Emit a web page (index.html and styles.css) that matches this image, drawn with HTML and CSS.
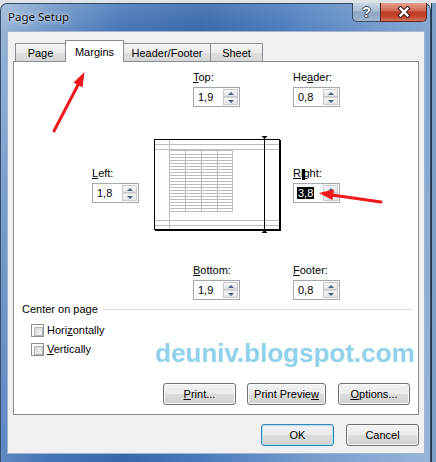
FILE: index.html
```html
<!DOCTYPE html>
<html>
<head>
<meta charset="utf-8">
<title>Page Setup</title>
<link rel="stylesheet" href="styles.css">
</head>
<body>
<div class="window">
  <div class="titlebar">
    <span class="title">Page Setup</span>
    <div class="caption">
      <div class="cbtn help"><span class="q">?</span></div>
      <div class="cbtn close">
        <svg width="14" height="12" viewBox="0 0 14 12"><path d="M3.5 2.5 L10.5 9.5 M10.5 2.5 L3.5 9.5" stroke="#3a1a14" stroke-width="4.4" stroke-linecap="square" fill="none"/><path d="M3.5 2.5 L10.5 9.5 M10.5 2.5 L3.5 9.5" stroke="#ffffff" stroke-width="2.4" stroke-linecap="square" fill="none"/></svg>
      </div>
    </div>
  </div>
  <div class="client">
    <div class="tabs">
      <div class="tab t-page">Page</div>
      <div class="tab t-margins active">Margins</div>
      <div class="tab t-hf">Header/Footer</div>
      <div class="tab t-sheet">Sheet</div>
    </div>
    <div class="panel">
      <div class="row row-top">
        <div class="field">
          <div class="lbl"><u>T</u>op:</div>
          <div class="spin"><span class="val">1,9</span><span class="arrows"><span class="up"></span><span class="down"></span></span></div>
        </div>
        <div class="field">
          <div class="lbl">He<u>a</u>der:</div>
          <div class="spin"><span class="val">0,8</span><span class="arrows"><span class="up"></span><span class="down"></span></span></div>
        </div>
      </div>
      <div class="row row-mid">
        <div class="field f-left">
          <div class="lbl"><u>L</u>eft:</div>
          <div class="spin"><span class="val">1,8</span><span class="arrows"><span class="up"></span><span class="down"></span></span></div>
        </div>
        <svg class="preview" width="139" height="97" viewBox="0 0 139 97">
          <rect x="1" y="4" width="126" height="91" fill="#000"/>
          <rect x="0.5" y="3.5" width="125" height="90" fill="#fff" stroke="#000"/>
          <g stroke="#bdbdbd" stroke-width="1" fill="none">
            <path d="M15.5 4 V93 M1 8.5 H125 M1 13.5 H125 M1 84.5 H125 M1 89.5 H125"/>
            <path d="M31.5 14.5 V75.5 M47.5 14.5 V75.5 M63.5 14.5 V75.5 M78.5 14.5 V75.5"/>
            <path d="M15.5 14.5 H78.5 M15.5 18.5 H78.5 M15.5 21.5 H78.5 M15.5 24.5 H78.5 M15.5 27.5 H78.5 M15.5 30.5 H78.5 M15.5 33.5 H78.5 M15.5 36.5 H78.5 M15.5 39.5 H78.5 M15.5 42.5 H78.5 M15.5 45.5 H78.5 M15.5 48.5 H78.5 M15.5 51.5 H78.5 M15.5 54.5 H78.5 M15.5 57.5 H78.5 M15.5 60.5 H78.5 M15.5 63.5 H78.5 M15.5 66.5 H78.5 M15.5 69.5 H78.5 M15.5 72.5 H78.5 M15.5 75.5 H78.5"/>
          </g>
          <path d="M110.5 0 V97" stroke="#000" stroke-width="1"/>
          <path d="M107.5 0 H113.5 L110.5 3 Z" fill="#000"/>
          <path d="M107.5 97 H113.5 L110.5 94 Z" fill="#000"/>
        </svg>
        <div class="field f-right">
          <div class="lbl"><u>R</u>ight:</div>
          <div class="spin"><span class="val"><span class="sel">3,8</span></span><span class="arrows"><span class="up"></span><span class="down"></span></span></div>
          <span class="ibeam"></span>
        </div>
      </div>
      <div class="row row-bot">
        <div class="field">
          <div class="lbl"><u>B</u>ottom:</div>
          <div class="spin"><span class="val">1,9</span><span class="arrows"><span class="up"></span><span class="down"></span></span></div>
        </div>
        <div class="field">
          <div class="lbl"><u>F</u>ooter:</div>
          <div class="spin"><span class="val">0,8</span><span class="arrows"><span class="up"></span><span class="down"></span></span></div>
        </div>
      </div>
      <div class="group-head"><span>Center on page</span><span class="rule"></span></div>
      <div class="check c1"><span class="cb"></span><span>Hori<u>z</u>ontally</span></div>
      <div class="check c2"><span class="cb"></span><span><u>V</u>ertically</span></div>
      <div class="panel-btns">
        <div class="btn b-print"><span><u>P</u>rint...</span></div>
        <div class="btn b-preview"><span>Print Previe<u>w</u></span></div>
        <div class="btn b-options"><span><u>O</u>ptions...</span></div>
      </div>
      <div class="watermark">deuniv.blogspot.com</div>
    </div>
    <div class="footer">
      <div class="btn default">OK</div>
      <div class="btn">Cancel</div>
    </div>
  </div>
</div>
<svg class="arrows-overlay" width="436" height="462" viewBox="0 0 436 462">
  <path d="M54 131 L79 83" stroke="#f01818" stroke-width="3" stroke-linecap="round" fill="none"/>
  <path d="M84.5 72 L82.5 87.5 L73.5 82.5 Z" fill="#f01818"/>
  <path d="M381 202 L332 195" stroke="#f01818" stroke-width="3" stroke-linecap="round" fill="none"/>
  <path d="M319 193 L334 189.5 L332.5 200 Z" fill="#f01818"/>
</svg>
</body>
</html>
```
FILE: styles.css
```css
* { box-sizing: border-box; }
html, body { margin: 0; padding: 0; }
body {
  width: 436px;
  height: 462px;
  overflow: hidden;
  position: relative;
  padding-top: 3px;
  background:
    linear-gradient(180deg, #dfe2e6 0 3px, transparent 3px),
    linear-gradient(90deg, #dfe2e6 0 431px, #22334a 431px 432px, #7d9ec6 432px);
  font-family: "Liberation Sans", Arial, sans-serif;
  font-size: 11px;
  color: #000;
}
u { text-decoration: underline; text-underline-offset: 1px; }

.window {
  width: 431px;
  height: 459px;
  border: 1px solid #34506f;
  border-bottom: 0;
  border-radius: 7px 7px 0 0;
  padding: 0 5px 0 6px;
  display: flex;
  flex-direction: column;
  background:
    linear-gradient(180deg, rgba(255,255,255,0.12), rgba(255,255,255,0) 28px),
    linear-gradient(100deg, #9db8da 0%, #7399c9 9%, #4676b7 24%, #3768aa 40%, #4a7cbd 56%, #7399cb 74%, #98b5d9 100%);
}

.titlebar {
  height: 27px;
  display: flex;
  justify-content: space-between;
  align-items: flex-start;
}
.title {
  margin: 5px 0 0 1px;
  font-family: "Noto Sans", sans-serif;
  font-size: 11.5px;
  line-height: 16px;
  color: #141414;
  text-shadow: 0 0 6px rgba(255,255,255,0.85), 0 0 3px rgba(255,255,255,0.6);
}
.caption {
  display: flex;
  margin: -1px -2px 0 0;
}
.cbtn {
  height: 19px;
  display: flex;
  align-items: center;
  justify-content: center;
  border: 1px solid #3b4d66;
  border-top: 0;
}
.help {
  width: 28px;
  border-right: 0;
  border-radius: 0 0 0 5px;
  background: linear-gradient(180deg, #c9d6e6 0%, #a9bcd3 45%, #8ea5c1 50%, #9fb5cf 100%);
}
.help .q {
  font-family: "Liberation Sans", sans-serif;
  font-weight: bold;
  font-size: 14px;
  line-height: 14px;
  color: #fff;
  text-shadow: 0 0 1px #2b3a50, 1px 0 0 #3d4f68, -1px 0 0 #3d4f68, 0 1px 0 #3d4f68, 0 -1px 0 #3d4f68;
}
.close {
  width: 47px;
  border-radius: 0 0 5px 0;
  border-color: #5b2820;
  background: linear-gradient(180deg, #e5a08e 0%, #d46c56 40%, #c03b26 52%, #c4452d 75%, #d7745a 100%);
}
.close svg { display: block; }

.client {
  height: 423px;
  background: #f0f0f0;
  border: 1px solid #9fb5d0;
  display: flex;
  flex-direction: column;
}

.tabs {
  height: 29px;
  display: flex;
  align-items: flex-end;
  padding-left: 7px;
}
.tab {
  height: 18px;
  border: 1px solid #898c95;
  border-bottom: 0;
  margin-left: -1px;
  padding-top: 2px;
  line-height: 14px;
  text-align: center;
  background: linear-gradient(180deg, #f5f5f5 0%, #ebebeb 50%, #dedede 55%, #d6d6d6 100%);
}
.tab:first-child { margin-left: 0; }
.tab.active {
  height: 22px;
  padding-top: 4px;
  margin-bottom: -1px;
  background: #fff;
  position: relative;
  z-index: 1;
}
.t-page { width: 51px; }
.t-margins { width: 59px; }
.t-hf { width: 88px; }
.t-sheet { width: 53px; }

.panel {
  margin-left: 5px;
  width: 406px;
  height: 354px;
  border: 1px solid #898c95;
  background: #fff;
  position: relative;
}

.row { display: flex; }
.row-top { margin-top: 8px; padding-left: 179px; }
.row-mid { margin-top: 29px; height: 97px; align-items: center; padding-left: 78px; }
.row-bot { margin-top: 30px; padding-left: 179px; }

.field { width: 100px; display: flex; flex-direction: column; position: relative; }
.f-left { width: 62px; }
.lbl { height: 14px; line-height: 14px; margin-bottom: 3px; }
.preview { display: block; flex: none; }

.spin {
  width: 47px;
  height: 20px;
  border: 1px solid #a4a9b1;
  background: #fff;
  display: flex;
  padding: 1px;
}
.val {
  flex: 1;
  padding-left: 3px;
  line-height: 16px;
}
.sel {
  background: #000;
  color: #fff;
  margin-left: -1px;
  padding: 0 1px;
}
.arrows {
  width: 15px;
  display: flex;
  flex-direction: column;
}
.up, .down {
  flex: 1;
  border: 1px solid #c6c9ce;
  background: linear-gradient(180deg, #f6f6f6, #e2e4e8);
  display: flex;
  align-items: center;
  justify-content: center;
}
.down { border-top-color: #d4d6da; }
.up::after, .down::after {
  content: "";
  width: 0;
  height: 0;
  border-left: 3px solid transparent;
  border-right: 3px solid transparent;
}
.up::after { border-bottom: 3px solid #4c6087; }
.down::after { border-top: 3px solid #4c6087; }

.ibeam {
  position: absolute;
  left: 9px;
  top: 3px;
  width: 3px;
  height: 11px;
  background: #000;
}

.group-head {
  margin-top: 3px;
  height: 13px;
  line-height: 13px;
  padding: 0 6px 0 8px;
  display: flex;
  align-items: center;
}
.group-head .rule {
  flex: 1;
  height: 1px;
  margin-left: 5px;
  background: #d5dfe5;
}

.check {
  height: 15px;
  display: flex;
  align-items: center;
  padding-left: 17px;
  line-height: 13px;
}
.c1 { margin-top: 7px; }
.c2 { margin-top: 4px; }
.cb {
  width: 13px;
  height: 13px;
  border: 1px solid #8e8f8f;
  background: #fff;
  padding: 2px;
  margin-right: 3px;
  flex: none;
}
.cb::after {
  content: "";
  display: block;
  width: 100%;
  height: 100%;
  border: 1px solid #b3b6ba;
  background: linear-gradient(135deg, #d3d5d8, #f6f6f6);
}

.panel-btns {
  margin-top: 26px;
  display: flex;
  padding-left: 149px;
}
.btn {
  height: 22px;
  border: 1px solid #707070;
  border-radius: 3px;
  background: linear-gradient(180deg, #f2f2f2 0%, #ebebeb 49%, #dddddd 51%, #cfcfcf 100%);
  box-shadow: inset 0 0 0 1px #fbfbfb;
  display: flex;
  align-items: center;
  justify-content: center;
  line-height: 13px;
  width: 73px;
}
.b-print { width: 73px; }
.b-preview { width: 79px; margin-left: 11px; }
.b-options { width: 72px; margin-left: 12px; }

.watermark {
  position: absolute;
  left: 141px;
  top: 276px;
  font-family: "Liberation Sans", Arial, sans-serif;
  font-weight: bold;
  font-size: 26px;
  line-height: 30px;
  color: #8fd2ea;
  white-space: nowrap;
}

.footer {
  margin-top: 9px;
  display: flex;
  justify-content: flex-end;
  gap: 12px;
  padding-right: 5px;
}
.btn.default {
  border-color: #3c7fb1;
  box-shadow: inset 0 0 0 1px #a8e2f7;
}

.arrows-overlay {
  position: absolute;
  left: 0;
  top: 0;
  pointer-events: none;
}
```
